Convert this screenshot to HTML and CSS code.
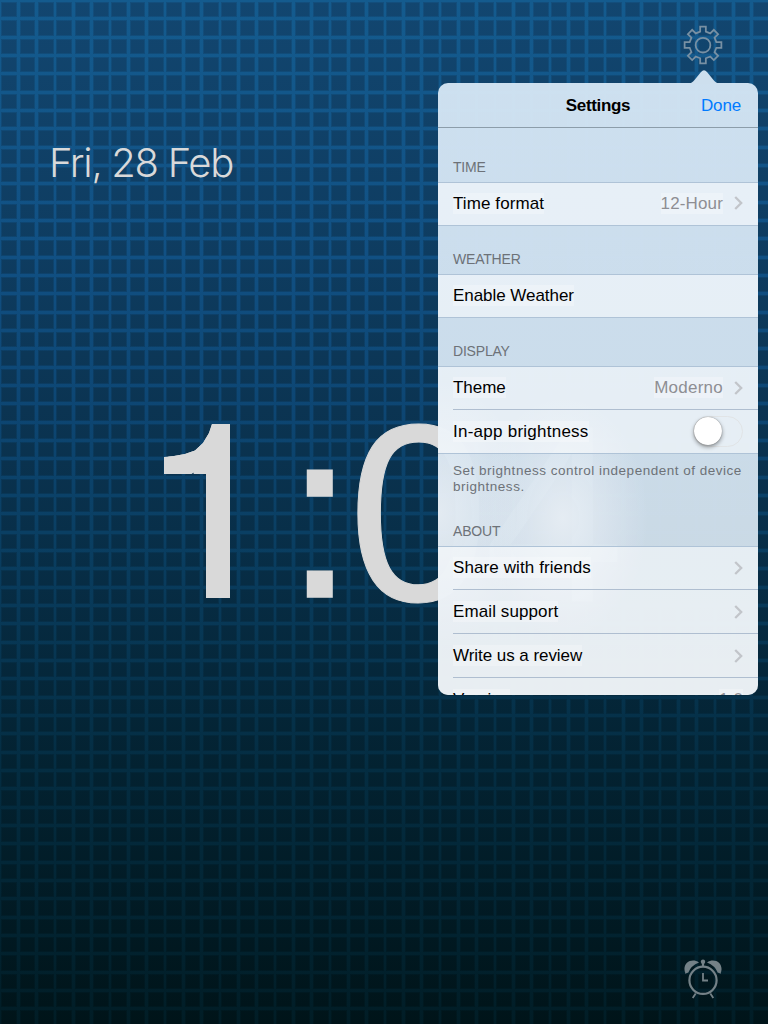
FILE: index.html
```
<!DOCTYPE html>
<html lang="en">
<head>
<meta charset="utf-8">
<title>Clock</title>
<link rel="stylesheet" href="styles.css">
</head>
<body>
<main class="screen">
  <svg class="wallpaper" width="768" height="1024">
    <defs>
      <linearGradient id="lines" x1="0" y1="0" x2="0" y2="1">
        <stop offset="0" stop-color="#145b8e"/><stop offset=".25" stop-color="#115083"/><stop offset=".4" stop-color="#0d4673"/><stop offset=".52" stop-color="#0a3f63"/><stop offset=".75" stop-color="#042d42"/><stop offset="1" stop-color="#011d26"/>
      </linearGradient>
      <linearGradient id="cells" x1="0" y1="0" x2="0" y2="1">
        <stop offset="0" stop-color="#124670"/><stop offset=".25" stop-color="#0e3c60"/><stop offset=".4" stop-color="#0b3452"/><stop offset=".52" stop-color="#082f49"/><stop offset=".75" stop-color="#032231"/><stop offset="1" stop-color="#001419"/>
      </linearGradient>
      <pattern id="grid" width="55" height="55" patternUnits="userSpaceOnUse">
        <path fill="#999" d="M1 2h16v15H1zM20 2h15v15H20zM38 2h16v15H38zM1 20h16v16H1zM20 20h15v16H20zM38 20h16v16H38zM1 39h16v15H1zM20 39h15v15H20zM38 39h16v15H38z"/>
        <path fill="#fff" d="M2 3h14v13H2zM21 3h13v13H21zM39 3h14v13H39zM2 21h14v14H2zM21 21h13v14H21zM39 21h14v14H39zM2 40h14v13H2zM21 40h13v13H21zM39 40h14v13H39z"/>
      </pattern>
      <mask id="tiles"><rect width="768" height="1024" fill="url(#grid)"/></mask>
    </defs>
    <rect width="768" height="1024" fill="url(#lines)"/>
    <rect width="768" height="1024" fill="url(#cells)" mask="url(#tiles)"/>
  </svg>

  <div class="date">Fri, 28 Feb</div>
  <div class="clock"><span class="one">1</span><span class="colon">:</span><span class="zero">0</span><span class="four">4</span></div>

  <svg class="icon gear" viewBox="0 0 40 40" width="42" height="42">
    <path d="M17.300 1.500h5.400v4.800l4.200 1.700 3.400-3.400 4.100 4.100-3.400 3.400 1.700 4.200h4.800v5.400h-4.800L31 25.900l3.400 3.400-4.100 4.100-3.400-3.400-4.200 1.700v4.800h-5.400v-4.800l-4.200-1.700-3.400 3.400-4.100-4.100L9 25.900l-1.700-4.200H2.500v-5.400h4.800L9 12.100 5.600 8.700l4.100-4.100L13.100 8l4.200-1.700z"/>
    <circle cx="20" cy="19.200" r="7"/>
  </svg>

  <svg class="icon alarm" viewBox="0 0 40 40" width="40" height="40">
    <path class="fill" d="M2.600 15C-2 5 8 -2 16 3.500Q8 6.500 5.200 13.800Q3.700 13.700 2.600 15zM37.400 15C42 5 32 -2 24 3.500Q32 6.500 34.800 13.800Q36.300 13.700 37.400 15z"/>
    <circle class="ring" cx="20" cy="21.300" r="13.600"/>
    <circle class="fill" cx="20" cy="2.800" r="2.200"/>
    <path class="ring" d="M20 4v4"/>
    <path class="hand" d="M20 14v7.500h5M12.700 34.500l-3 4.500M27.300 34.500l3 4.500"/>
  </svg>

  <section class="popover">
    <svg class="arrow" width="34" height="14" viewBox="0 0 34 14"><path d="M0 14Q5 13.500 7.500 10L14 2Q17-1.300 20 2L26.500 10Q29 13.500 34 14z"/></svg>
    <div class="panel">
      <header class="bar"><b>Settings</b><span class="done">Done</span></header>
      <h2 class="heading first">TIME</h2>
      <div class="group"><div class="row single"><span class="label">Time format</span><span class="value">12-Hour</span><svg class="chev" viewBox="0 0 9 14"><path d="M1.200 1l6 6-6 6"/></svg></div></div>
      <h2 class="heading">WEATHER</h2>
      <div class="group"><div class="row single"><span class="label tight">Enable Weather</span></div></div>
      <h2 class="heading">DISPLAY</h2>
      <div class="group">
        <div class="row"><span class="label tight">Theme</span><span class="value wide">Moderno</span><svg class="chev" viewBox="0 0 9 14"><path d="M1.200 1l6 6-6 6"/></svg></div>
        <div class="row"><span class="label wide">In-app brightness</span><span class="switch"><i class="knob"></i></span></div>
      </div>
      <p class="note">Set brightness control independent of device<br>brightness.</p>
      <h2 class="heading about">ABOUT</h2>
      <div class="group">
        <div class="row"><span class="label">Share with friends</span><svg class="chev" viewBox="0 0 9 14"><path d="M1.200 1l6 6-6 6"/></svg></div>
        <div class="row tall"><span class="label">Email support</span><svg class="chev" viewBox="0 0 9 14"><path d="M1.200 1l6 6-6 6"/></svg></div>
        <div class="row tall"><span class="label tight">Write us a review</span><svg class="chev" viewBox="0 0 9 14"><path d="M1.200 1l6 6-6 6"/></svg></div>
        <div class="row"><span class="label">Version</span><span class="value version">1.0</span></div>
      </div>
    </div>
  </section>
</main>
</body>
</html>
```
FILE: styles.css
```
* { box-sizing: border-box; }
body { margin: 0; font-family: "Liberation Sans", Arial, sans-serif; }
.screen { position: relative; width: 768px; height: 1024px; overflow: hidden; background: #0b3655; }
.wallpaper { display: block; }
.date { position: absolute; left: 49px; top: 138px; font: 300 40px/50px Inter, sans-serif; letter-spacing: -1.300px; color: #d9d9d9; white-space: nowrap; }
.clock { position: absolute; left: 140px; top: 369px; height: 290px; font-size: 253px; line-height: 290px; color: #d9d9d9; display: flex; white-space: nowrap; }
.clock span { width: 141px; }
.clock .one { transform: translate(4px, -3px); -webkit-text-stroke: 28px #d9d9d9; clip-path: polygon(20px 91px, 30px 90px, 41px 88px, 51px 84.500px, 59px 77px, 65px 67px, 68px 58px, 86px 58px, 86px 232px, 62px 232px, 62px 108px, 20px 108px); }
.clock .colon { width: 70px; font-size: 236px; -webkit-text-stroke: 3.500px #d9d9d9; transform: translate(6px, 0); }
.clock .zero { transform: translateX(-3px); -webkit-text-stroke: 1px #d9d9d9; }
.clock .four { transform: translateX(-8px); }
.icon { position: absolute; fill: none; stroke: #7890a3; stroke-width: 1.700; }
.gear { left: 682px; top: 25px; }
.alarm { left: 683px; top: 959px; stroke: #748187; }
.alarm .fill { fill: #748187; stroke: none; }
.alarm .ring { stroke-width: 2.200; }
.alarm .hand { stroke-width: 1.800; }
.popover { position: absolute; left: 438px; top: 83px; width: 320px; height: 612px; }
.arrow { position: absolute; left: 249px; top: -13px; fill: #cddfee; }
.panel { height: 612px; overflow: hidden; border-radius: 10px; background: radial-gradient(ellipse 85px 120px at 125px 435px, #e9eff5dd, #e9eff500), radial-gradient(ellipse 90px 130px at 0 430px, #e9eff5cc, #e9eff500), linear-gradient(#d1e3f2fa, #cfe0eefa 45%, #cedde9fa 75%, #d3dee7fa); }
.bar { height: 45px; display: grid; place-items: center; position: relative; border-bottom: 1px solid #8c9daa; font-size: 17px; letter-spacing: -.35px; padding-top: 1px; }
.done { position: absolute; right: 17px; top: 13px; letter-spacing: -.15px; color: #007aff; }
.heading { margin: 0; height: 48px; padding: 25px 15px 0; font-size: 14px; line-height: 16px; letter-spacing: -.2px; font-weight: 400; color: #6d7278; }
.heading.first { height: 54px; padding-top: 31px; }
.heading.about { height: 50px; padding-top: 27px; }
.group { background: rgba(255,255,255,.53); border-top: 1px solid #afc3d7; border-bottom: 1px solid #afc3d7; }
.row { height: 43px; margin-left: 15px; padding: 0 15px 1px 0; display: flex; align-items: center; border-bottom: 1px solid #afbed0; font-size: 17px; line-height: 21px; }
.row.single { height: 42px; padding-bottom: 2px; }
.row.tall { height: 44px; padding-bottom: 0; }
.row:last-child { border-bottom: 0; }
.label { background: rgba(255,255,255,.28); color: #000; letter-spacing: .1px; }
.label.tight { letter-spacing: -.05px; }
.wide.wide { letter-spacing: .25px; }
.value { margin-left: auto; margin-right: 11px; color: #8e8e93; background: rgba(255,255,255,.28); letter-spacing: .14px; }
.value.version { margin-right: 0; }
.chev { width: 9px; height: 14px; fill: none; stroke: #c2c5ca; stroke-width: 2.300; }
.label + .chev { margin-left: auto; }
.switch { width: 50px; height: 31px; margin-left: auto; border: 1.500px solid #e1e4e6; border-radius: 16px; }
.knob { display: block; width: 28px; height: 28px; border-radius: 50%; background: #fff; box-shadow: 0 2px 4px rgba(0,0,0,.4), 0 0 1px rgba(0,0,0,.5); }
.note { margin: 0; height: 42px; padding: 9px 15px 0; font-size: 13.500px; line-height: 16px; letter-spacing: .51px; color: #6d7278; white-space: nowrap; }
```
